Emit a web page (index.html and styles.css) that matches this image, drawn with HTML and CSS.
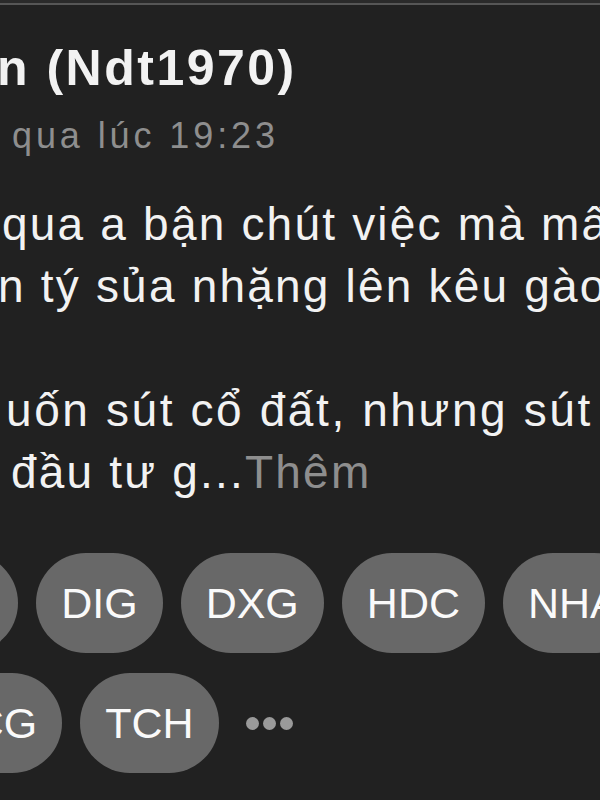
FILE: index.html
```html
<!DOCTYPE html>
<html lang="vi">
<head>
    <meta charset="UTF-8">
    <meta name="viewport" content="width=device-width, initial-scale=1.0">
    <title>Bài viết</title>
    <link rel="stylesheet" href="styles.css">
</head>
<body>
    <div class="post">
        <div class="post-head">
            <div class="author">n (Ndt1970)</div>
            <div class="time">qua lúc 19:23</div>
        </div>

        <div class="post-body">
            <div class="line line-1">qua a bận chút việc mà mất</div>
            <div class="line line-2">n tý sủa nhặng lên kêu gào</div>
            <div class="line line-gap"></div>
            <div class="line line-4">uốn sút cổ đất, nhưng sút</div>
            <div class="line line-5">đầu tư g...<span class="more">Thêm</span></div>
        </div>

        <div class="tags">
            <div class="tag-row">
                <span class="tag tag-cut">CEO</span>
                <span class="tag">DIG</span>
                <span class="tag">DXG</span>
                <span class="tag">HDC</span>
                <span class="tag">NHA</span>
            </div>
            <div class="tag-row">
                <span class="tag tag-cut-2">VCG</span>
                <span class="tag">TCH</span>
                <span class="dots">
                    <i></i><i></i><i></i>
                </span>
            </div>
        </div>
    </div>
</body>
</html>
```

FILE: styles.css
```css
body {
    margin: 0;
    background-color: #212121;
    font-family: "Liberation Sans", Arial, sans-serif;
    color: #f2f2f2;
}

.post {
    width: 600px;
    height: 800px;
    overflow: hidden;
    border-top: 3px solid #2a2a2a;
    box-sizing: border-box;
}

.post-head {
    border-top: 2px solid #565656;
    padding-top: 33px;
}

.author {
    font-size: 50px;
    font-weight: 700;
    line-height: 60px;
    letter-spacing: 2.5px;
    margin-left: -3px;
    white-space: nowrap;
}

.time {
    font-size: 36px;
    line-height: 44px;
    letter-spacing: 3.9px;
    color: #8e8e8e;
    padding-left: 12px;
    margin-top: 16px;
    white-space: nowrap;
}

.post-body {
    margin-top: 35px;
}

.line {
    font-size: 46px;
    line-height: 62px;
    height: 62px;
    letter-spacing: 2.2px;
    white-space: nowrap;
}

.line-1 {
    padding-left: 2px;
}

.line-2 {
    margin-left: -2px;
}

.line-4 {
    padding-left: 6px;
    letter-spacing: 2.6px;
}

.line-5 {
    padding-left: 11px;
}

.more {
    color: #8e8e8e;
}

.tags {
    margin-top: 50px;
    display: flex;
    flex-direction: column;
    gap: 20px;
}

.tag-row {
    display: flex;
    align-items: center;
    gap: 18px;
    white-space: nowrap;
}

.tag {
    flex-shrink: 0;
    height: 100px;
    padding: 0 25px;
    border-radius: 50px;
    background-color: #686868;
    color: #fafafa;
    font-size: 43px;
    line-height: 100px;
}

.tag-cut {
    margin-left: -125px;
}

.tag-cut-2 {
    margin-left: -81px;
}

.dots {
    display: flex;
    gap: 4px;
    margin-left: 9px;
}

.dots i {
    width: 13px;
    height: 13px;
    border-radius: 50%;
    background-color: #9a9a9a;
}
```
